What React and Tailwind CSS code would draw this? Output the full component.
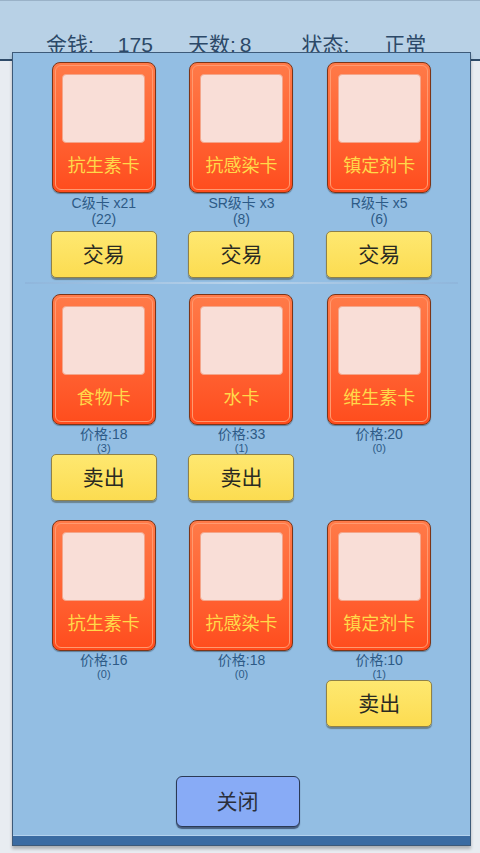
import React from "react";

const FONT = { fontFamily: '"Liberation Sans", "Noto Sans CJK SC", sans-serif' };

const topCards = [
  { name: "抗生素卡", line1: "C级卡 x21", line2: "(22)" },
  { name: "抗感染卡", line1: "SR级卡 x3", line2: "(8)" },
  { name: "镇定剂卡", line1: "R级卡 x5", line2: "(6)" },
];

const sellRows = [
  [
    { name: "食物卡", price: 18, count: 3, sell: true },
    { name: "水卡", price: 33, count: 1, sell: true },
    { name: "维生素卡", price: 20, count: 0, sell: false },
  ],
  [
    { name: "抗生素卡", price: 16, count: 0, sell: false },
    { name: "抗感染卡", price: 18, count: 0, sell: false },
    { name: "镇定剂卡", price: 10, count: 1, sell: true },
  ],
];

function Card({ name }) {
  return (
    <div className="w-[104px] h-[131px] rounded-lg border border-[#7c3518] bg-gradient-to-b from-[#ff7a48] to-[#ff4c1c] p-[2px] shadow-[0_1px_1px_rgba(0,0,0,0.35)]">
      <div className="h-full w-full rounded-md border border-[#ff9a70] flex flex-col items-center pt-[8px]">
        <div className="w-[83px] h-[69px] rounded-sm bg-[#f9ded7] border border-[#f4a58a]" />
        <div className="mt-[14px] text-[18px] leading-none text-[#ffd94a]">{name}</div>
      </div>
    </div>
  );
}

function Btn({ children }) {
  return (
    <div className="w-[106px] h-[47px] rounded-[5px] border border-[#8f8148] bg-gradient-to-b from-[#fee870] to-[#fcdc50] shadow-[0_2px_1px_rgba(60,60,40,0.45)] flex items-center justify-center text-[21px] text-[#2a2a22]">
      {children}
    </div>
  );
}

export default function App() {
  return (
    <div className="relative w-[480px] h-[853px] overflow-hidden bg-[#e8ecf1]" style={FONT}>
      {/* header */}
      <div className="h-[61px] bg-[#b8d1e6] border-t border-[#9ab2c8] border-b-2 border-b-[#2f4b69] text-[21px] text-[#2c4968] leading-none">
        <div className="flex pt-[33px] pl-[46px]">
          <span>金钱:</span>
          <span className="ml-[24px]">175</span>
          <span className="ml-[35px]">天数:</span>
          <span className="ml-[4px]">8</span>
          <span className="ml-[50px]">状态:</span>
          <span className="ml-[35px]">正常</span>
        </div>
      </div>

      {/* modal panel */}
      <div className="absolute left-[12px] top-[52px] w-[459px] h-[794px] border border-[#3d5a79] bg-[#93bee3] shadow-[0_3px_3px_rgba(0,0,0,0.25)] flex flex-col">
        <div className="flex-1 flex flex-col px-[22px] pt-[9px]">
          {/* trade row */}
          <div className="grid grid-cols-3">
            {topCards.map((c, i) => (
              <div key={i} className="flex flex-col items-center">
                <Card name={c.name} />
                <div className="mt-[2px] text-[14px] leading-[16px] text-[#2d5a86]">{c.line1}</div>
                <div className="text-[14px] leading-[16px] text-[#2d5a86]">{c.line2}</div>
                <div className="mt-[4px]">
                  <Btn>交易</Btn>
                </div>
              </div>
            ))}
          </div>

          <div className="mt-[4px] mx-[-10px] h-[2px] bg-gradient-to-r from-[#8fb6dc] via-[#b9d3ea] to-[#8fb6dc]" />

          {sellRows.map((row, r) => (
            <div key={r} className={"grid grid-cols-3 " + (r === 0 ? "mt-[10px]" : "mt-[19px]")}>
              {row.map((c, i) => (
                <div key={i} className="flex flex-col items-center">
                  <Card name={c.name} />
                  <div className="mt-[2px] text-[14px] leading-[15px] text-[#2d5a86]">价格:{c.price}</div>
                  <div className="text-[11px] leading-[12px] text-[#2d5a86]">({c.count})</div>
                  {c.sell && <Btn>卖出</Btn>}
                </div>
              ))}
            </div>
          ))}

          <div className="mt-auto mb-[8px] flex justify-center">
            <div className="ml-[-8px] w-[124px] h-[51px] rounded-md border border-[#2b3a55] bg-[#88abf6] shadow-[0_2px_1px_rgba(20,30,60,0.6)] flex items-center justify-center text-[21px] text-[#2a2f3a]">
              关闭
            </div>
          </div>
        </div>
        <div className="h-[1px] bg-[#b4d2ee]" />
        <div className="h-[9px] bg-[#3a6ba2]" />
      </div>
    </div>
  );
}
